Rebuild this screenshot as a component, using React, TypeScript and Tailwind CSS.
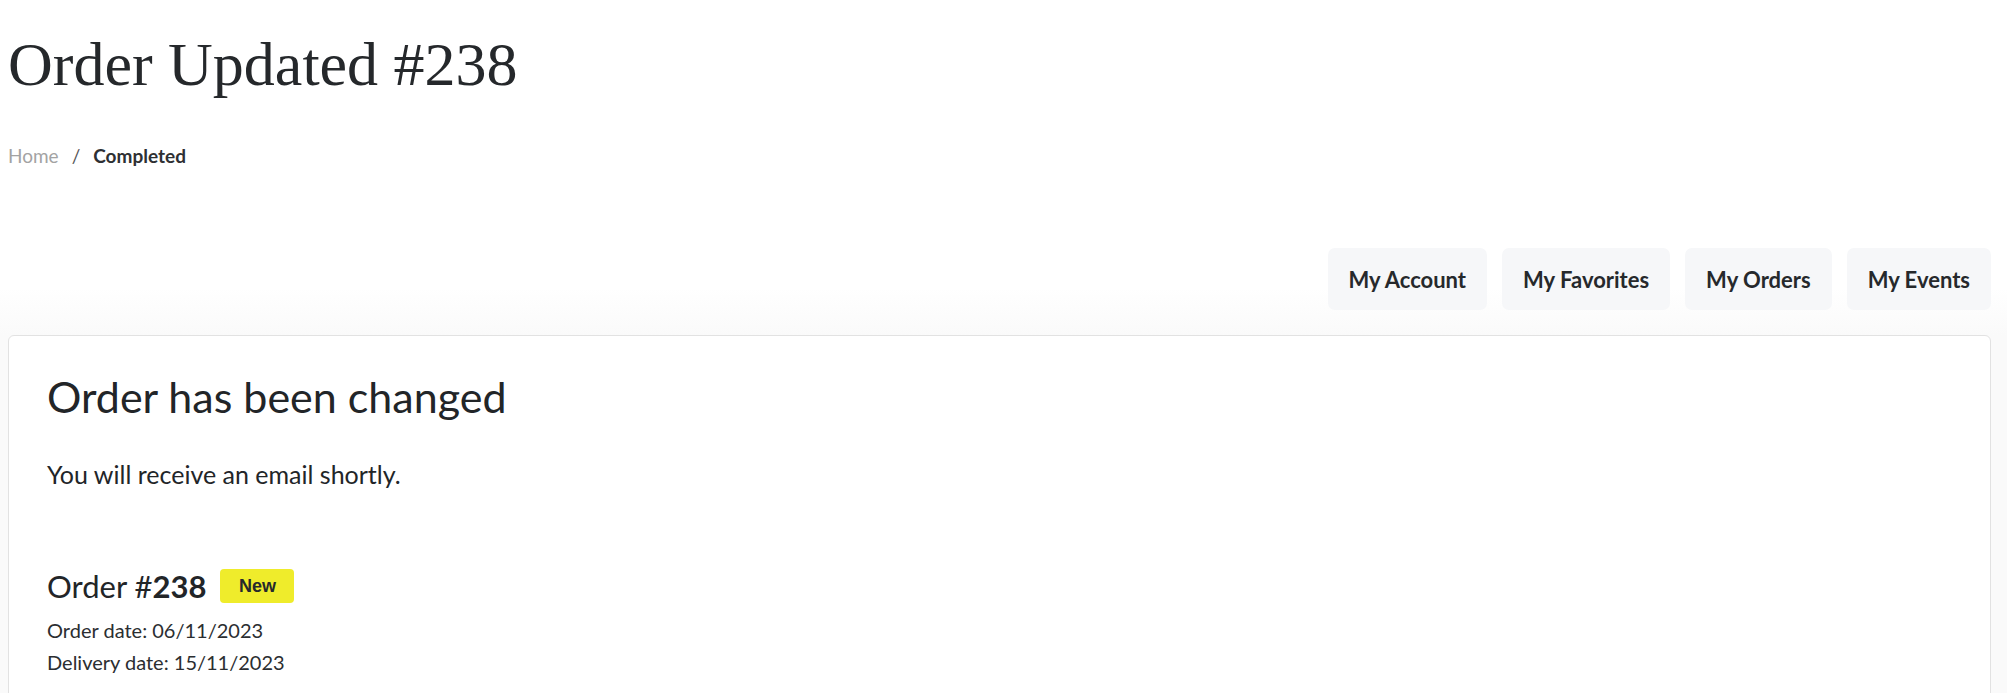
import React from "react";

const lato = { fontFamily: "Lato, 'Noto Sans', sans-serif" } as const;

export default function App() {
  const navItems = ["My Account", "My Favorites", "My Orders", "My Events"];
  return (
    <div
      className="h-[693px] w-full overflow-hidden bg-white text-[#232629]"
      style={lato}
    >
      <div className="pl-[8px] pr-[16px]">
        <h1 className="pt-[33px] text-[62px] leading-none font-normal text-[#25282b] font-['Liberation_Serif',serif]">
          Order Updated #238
        </h1>
        <nav className="mt-[51px] flex items-center text-[19px] leading-none font-['Lato',sans-serif]">
          <span className="text-[#a3a3a3]">Home</span>
          <span className="mx-[13px] text-[#555]">/</span>
          <span className="font-bold text-[#2e3033]">Completed</span>
        </nav>
      </div>

      <div className="mt-[83px] pl-[8px] pr-[16px] bg-[linear-gradient(to_bottom,#ffffff_40px,#fafafa_88px)] min-h-[500px]">
        <div className="flex justify-end gap-[15px]">
          {navItems.map((n) => (
            <div
              key={n}
              className="flex h-[62px] items-center rounded-[7px] bg-[#f6f7f9] px-[21px] text-[22px] font-bold text-[#26292c]"
            >
              {n}
            </div>
          ))}
        </div>

        <div className="mt-[25px] min-h-[420px] rounded-[6px] border border-[#e2e2e2] bg-white pl-[38px] pt-[39px]">
          <h2 className="text-[43px] leading-none font-normal text-[#222528]">
            Order has been changed
          </h2>
          <p className="mt-[44px] text-[25px] leading-none text-[#222528]">
            You will receive an email shortly.
          </p>

          <div className="mt-[82px] flex h-[34px] items-center">
            <span className="text-[31px] leading-none text-[#222528]">
              Order #<span className="font-bold">238</span>
            </span>
            <span className="ml-[14px] flex h-[34px] w-[74px] items-center justify-center rounded-[4px] bg-[#efec2b] text-[18px] font-bold text-[#26292c] font-['Liberation_Sans',sans-serif]">
              New
            </span>
          </div>
          <div className="mt-[11px] text-[20px] leading-[32px] text-[#2b2e31]">
            <div>Order date: 06/11/2023</div>
            <div>Delivery date: 15/11/2023</div>
          </div>
        </div>
      </div>
    </div>
  );
}
